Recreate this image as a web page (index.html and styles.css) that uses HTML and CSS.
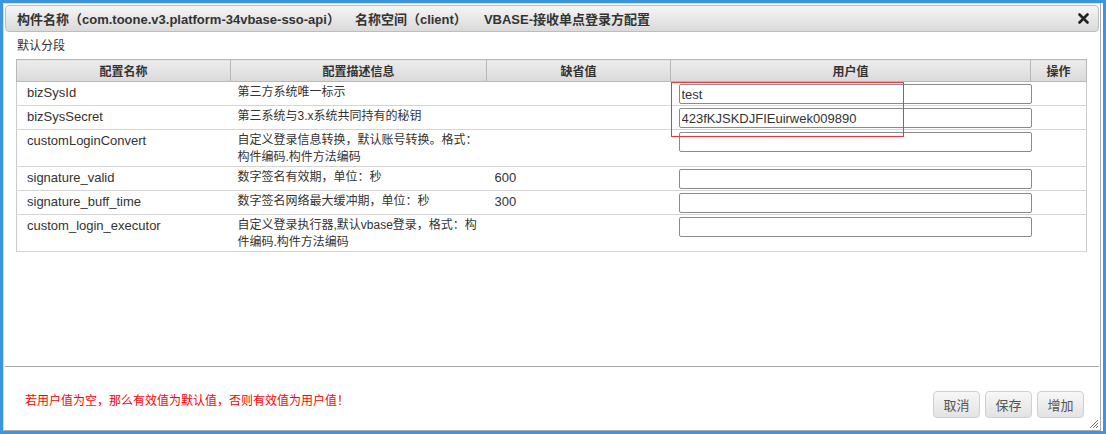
FILE: index.html
```html
<!DOCTYPE html>
<html lang="zh-CN">
<head>
    <meta charset="UTF-8">
    <title>构件配置</title>
    <link rel="stylesheet" href="styles.css">
</head>
<body>
    <div class="window">
        <div class="title-bar">
            <span class="title-part title-first">构件名称（com.toone.v3.platform-34vbase-sso-api）</span>
            <span class="title-part title-second">名称空间（client）</span>
            <span class="title-part">VBASE-接收单点登录方配置</span>
            <span class="close-btn">
                <svg width="11" height="11" viewBox="0 0 11 11"><path d="M1.5 1.5 L9.5 9.5 M9.5 1.5 L1.5 9.5" stroke="#222" stroke-width="2.6" stroke-linecap="round"/></svg>
            </span>
        </div>

        <div class="content">
            <div class="section-label">默认分段</div>
            <table class="config-table">
                <thead>
                    <tr>
                        <th class="col-name">配置名称</th>
                        <th class="col-desc">配置描述信息</th>
                        <th class="col-default">缺省值</th>
                        <th class="col-value">用户值</th>
                        <th class="col-op">操作</th>
                    </tr>
                </thead>
                <tbody>
                    <tr>
                        <td class="name">bizSysId</td>
                        <td class="desc">第三方系统唯一标示</td>
                        <td class="default"></td>
                        <td class="value has-mark"><input type="text" value="test"><div class="mark-box"></div></td>
                        <td></td>
                    </tr>
                    <tr>
                        <td class="name">bizSysSecret</td>
                        <td class="desc">第三系统与3.x系统共同持有的秘钥</td>
                        <td class="default"></td>
                        <td class="value"><input type="text" value="423fKJSKDJFIEuirwek009890"></td>
                        <td></td>
                    </tr>
                    <tr>
                        <td class="name">customLoginConvert</td>
                        <td class="desc">自定义登录信息转换，默认账号转换。格式：构件编码.构件方法编码</td>
                        <td class="default"></td>
                        <td class="value"><input type="text" value=""></td>
                        <td></td>
                    </tr>
                    <tr>
                        <td class="name">signature_valid</td>
                        <td class="desc">数字签名有效期，单位：秒</td>
                        <td class="default">600</td>
                        <td class="value"><input type="text" value=""></td>
                        <td></td>
                    </tr>
                    <tr>
                        <td class="name">signature_buff_time</td>
                        <td class="desc">数字签名网络最大缓冲期，单位：秒</td>
                        <td class="default">300</td>
                        <td class="value"><input type="text" value=""></td>
                        <td></td>
                    </tr>
                    <tr>
                        <td class="name">custom_login_executor</td>
                        <td class="desc">自定义登录执行器,默认vbase登录，格式：构件编码.构件方法编码</td>
                        <td class="default"></td>
                        <td class="value"><input type="text" value=""></td>
                        <td></td>
                    </tr>
                </tbody>
            </table>
        </div>

        <div class="footer">
            <span class="tip">若用户值为空，那么有效值为默认值，否则有效值为用户值！</span>
            <div class="buttons">
                <button>取消</button>
                <button>保存</button>
                <button>增加</button>
            </div>
        </div>

        <svg class="resize-grip" width="11" height="11" viewBox="0 0 11 11">
            <path d="M10 2 L2 10 M10 5 L5 10 M10 8 L8 10" stroke="#777" stroke-width="1"/>
        </svg>
    </div>
</body>
</html>
```

FILE: styles.css
```css
body {
    margin: 0;
    padding: 3px;
    background-color: #3d95e2;
    font-family: "Liberation Sans", "Noto Sans CJK SC", sans-serif;
    color: #333;
}
.window {
    position: relative;
    width: 1098px;
    height: 428px;
    box-sizing: border-box;
    background-color: #fff;
    border: 1px solid #aaa;
    border-color: #dcdcdc #aaa #aaa #dcdcdc;
    box-shadow: 2px 0 0 #fff;
    display: flex;
    flex-direction: column;
}
.title-bar {
    margin: 1px;
    height: 27px;
    box-sizing: border-box;
    border: 1px solid #bdbdbd;
    border-radius: 4px;
    background: linear-gradient(#f5f5f5, #dadada);
    display: flex;
    align-items: center;
    padding-left: 11px;
    font-size: 13px;
    font-weight: bold;
    color: #333;
}
.title-part {
    margin-right: 12px;
}
.title-part.title-first {
    margin-right: 15px;
}
.title-part.title-second {
    margin-right: 17px;
}
.close-btn {
    margin-left: auto;
    margin-right: 9px;
    display: flex;
}
.content {
    flex: 1;
    padding: 4px 11px 0 12px;
}
.section-label {
    font-size: 12px;
    line-height: 18px;
    padding-left: 1px;
    margin-bottom: 4px;
}
.config-table {
    width: 1071px;
    border-collapse: collapse;
    border: 1px solid #ccc;
    table-layout: fixed;
}
.config-table th {
    height: 21px;
    padding: 0;
    font-size: 12px;
    font-weight: bold;
    color: #333;
    background: linear-gradient(#ededed, #d9d9d9);
    border: 1px solid #b9b9b9;
}
.col-name { width: 213px; }
.col-desc { width: 255px; }
.col-default { width: 183px; }
.col-value { width: 359px; }
.config-table td {
    border-bottom: 1px solid #d4d4d4;
    vertical-align: top;
    padding: 2px 0 0 0;
    font-size: 13px;
    line-height: 17px;
}
.config-table td.name {
    padding-left: 10px;
}
.config-table td.desc {
    padding-left: 7px;
    padding-right: 6px;
    font-size: 12px;
}
.config-table td.default {
    padding-left: 8px;
}
.config-table td.value {
    padding: 2px 0 1px 8px;
}
.config-table td.has-mark {
    position: relative;
}
.value input {
    display: block;
    width: 353px;
    height: 20px;
    box-sizing: border-box;
    border: 1px solid #8a8a8a;
    border-radius: 2px;
    padding: 0 2px;
    font-family: "Liberation Sans", sans-serif;
    font-size: 13px;
    color: #333;
    background: #fff;
}
.mark-box {
    position: absolute;
    left: 0;
    top: 0;
    width: 233px;
    height: 55px;
    box-sizing: border-box;
    border: 1px solid #e8383d;
    pointer-events: none;
}
.footer {
    margin: 0 1px;
    height: 64px;
    border-top: 1px solid #aaa;
    display: flex;
    align-items: flex-start;
    padding: 24px 15px 0 20px;
    box-sizing: border-box;
}
.tip {
    color: #f00;
    font-size: 12px;
    line-height: 27px;
    margin-top: -3px;
}
.buttons {
    margin-left: auto;
    display: flex;
    gap: 5px;
}
.buttons button {
    width: 47px;
    height: 27px;
    padding: 0;
    border: 1px solid #d0d0d0;
    border-radius: 4px;
    background: linear-gradient(#f7f7f7, #e3e3e3);
    color: #555;
    font-family: "Liberation Sans", "Noto Sans CJK SC", sans-serif;
    font-size: 13px;
}
.resize-grip {
    position: absolute;
    right: 1px;
    bottom: 1px;
}
```
